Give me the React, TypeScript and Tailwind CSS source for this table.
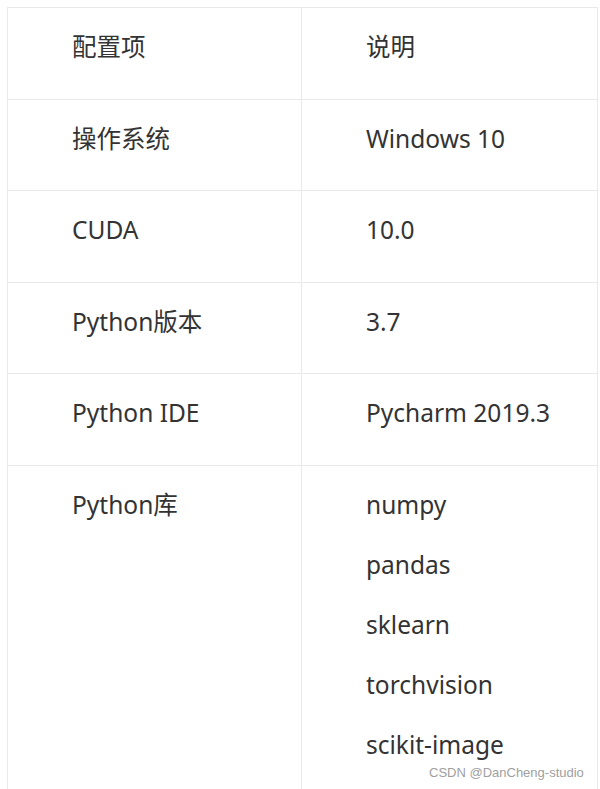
import React from "react";

const rows: { k: string; v: string[] }[] = [
  { k: "配置项", v: ["说明"] },
  { k: "操作系统", v: ["Windows 10"] },
  { k: "CUDA", v: ["10.0"] },
  { k: "Python版本", v: ["3.7"] },
  { k: "Python IDE", v: ["Pycharm 2019.3"] },
  { k: "Python库", v: ["numpy", "pandas", "sklearn", "torchvision", "scikit-image"] },
];

export default function App() {
  return (
    <div
      className="relative w-[600px] h-[789px] overflow-hidden bg-white text-[#333333]"
      style={{ fontFamily: '"Noto Sans", "Noto Sans CJK SC", sans-serif' }}
    >
      <div className="ml-[7px] mt-[7px] w-[591px] border-l border-t border-r border-[#e9e9e9]">
        {rows.map((r, i) => (
          <div key={i} className="grid grid-cols-[294px_1fr] border-b border-[#e9e9e9]">
            <div className="border-r border-[#e9e9e9] pl-[64px] pt-[19px] pb-[31.6px]">
              <div className="h-[40px] leading-[40px] text-[24.5px]">{r.k}</div>
            </div>
            <div className="pl-[64px] pt-[19px] pb-[31.6px] flex flex-col gap-[20px]">
              {r.v.map((t, j) => (
                <div key={j} className="h-[40px] leading-[40px] text-[24.5px]">{t}</div>
              ))}
            </div>
          </div>
        ))}
      </div>
      <div
        className="absolute left-[429px] top-[763px] text-[13px] text-[#a0a0a0]"
        style={{ fontFamily: '"Liberation Sans", Arial, sans-serif' }}
      >
        CSDN @DanCheng-studio
      </div>
    </div>
  );
}
